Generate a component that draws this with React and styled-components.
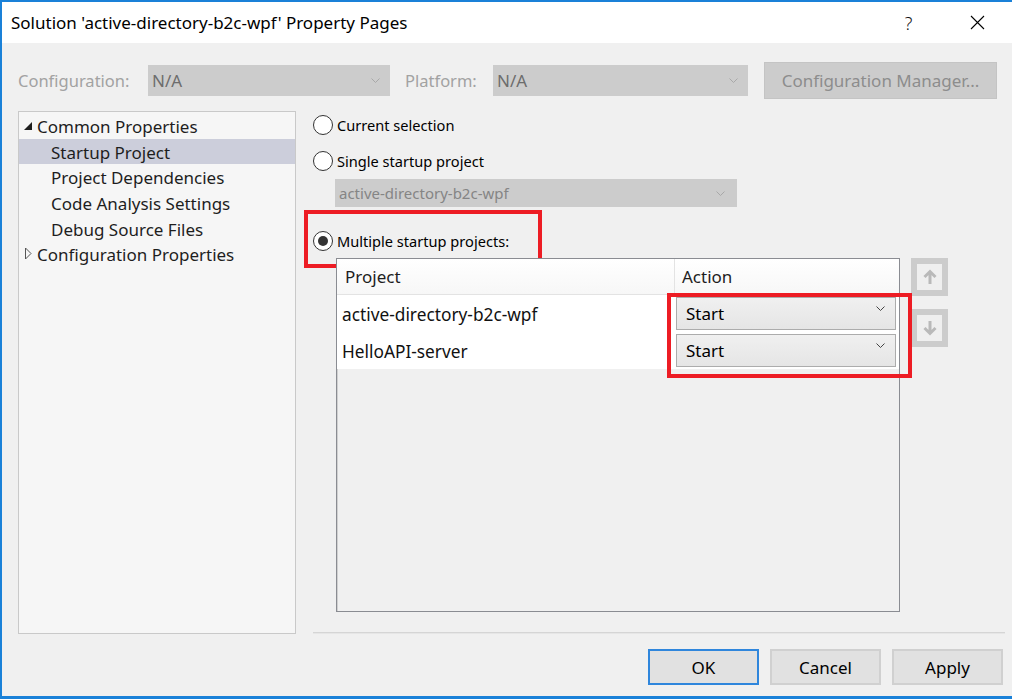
import styled, { createGlobalStyle } from 'styled-components'

const GlobalStyle = createGlobalStyle`
  html, body { margin: 0; padding: 0; background: #f0f0f0; }
  body { font-family: "Noto Sans", "Open Sans", sans-serif; color: #000; }
  * { box-sizing: border-box; }
`;

const projects = [
  { name: 'active-directory-b2c-wpf', action: 'Start' },
  { name: 'HelloAPI-server', action: 'Start' },
];

const treeItems = [
  { label: 'Common Properties', level: 0, expanded: true },
  { label: 'Startup Project', level: 1, selected: true },
  { label: 'Project Dependencies', level: 1 },
  { label: 'Code Analysis Settings', level: 1 },
  { label: 'Debug Source Files', level: 1 },
  { label: 'Configuration Properties', level: 0, expanded: false },
];

function Chevron({ color = '#9a9a9a' }) {
  return (
    <svg width="9" height="5" viewBox="0 0 9 5">
      <path d="M0.5 0.5 L4.5 4.5 L8.5 0.5" fill="none" stroke={color} strokeWidth="1" />
    </svg>
  )
}

function Expander({ expanded }) {
  if (expanded) {
    return (
      <svg width="10" height="10" viewBox="0 0 10 10">
        <polygon points="9,1 9,9 1,9" fill="#1e1e1e" />
      </svg>
    )
  }
  return (
    <svg width="10" height="13" viewBox="0 0 10 13">
      <polygon points="2.5,1 8,6.5 2.5,12" fill="none" stroke="#555" strokeWidth="1" />
    </svg>
  )
}

function Arrow({ down }) {
  return (
    <svg width="14" height="16" viewBox="0 0 14 16" style={down ? { transform: 'rotate(180deg)' } : undefined}>
      <path d="M7 15 V3 M1.5 8 L7 2.5 L12.5 8" fill="none" stroke="#b9b9b9" strokeWidth="3" />
    </svg>
  )
}

export default function App() {
  return (
    <Window>
      <GlobalStyle />
      <TitleBar>
        <Title>Solution 'active-directory-b2c-wpf' Property Pages</Title>
        <CaptionButton>?</CaptionButton>
        <CaptionButton>
          <svg width="15" height="15" viewBox="0 0 15 15">
            <path d="M1 1 L14 14 M14 1 L1 14" stroke="#000" strokeWidth="1.1" />
          </svg>
        </CaptionButton>
      </TitleBar>
      <Body>
        <ConfigRow>
          <ConfigLabel $width={130}>Configuration:</ConfigLabel>
          <DisabledCombo $width={242}>
            N/A
            <Chevron color="#a8a8a8" />
          </DisabledCombo>
          <ConfigLabel $width={88} $gap={15}>Platform:</ConfigLabel>
          <DisabledCombo $width={255}>
            N/A
            <Chevron color="#a8a8a8" />
          </DisabledCombo>
          <DisabledButton>Configuration Manager...</DisabledButton>
        </ConfigRow>
        <Main>
          <Tree>
            {treeItems.map((item) => (
              <TreeRow key={item.label} $level={item.level} $selected={item.selected}>
                {item.level === 0 && (
                  <ExpanderBox>
                    <Expander expanded={item.expanded} />
                  </ExpanderBox>
                )}
                {item.label}
              </TreeRow>
            ))}
          </Tree>
          <Pane>
            <RadioRow>
              <Radio />
              Current selection
            </RadioRow>
            <RadioRow $top={10}>
              <Radio />
              Single startup project
            </RadioRow>
            <ProjectCombo>
              active-directory-b2c-wpf
              <Chevron color="#a8a8a8" />
            </ProjectCombo>
            <RadioRow $top={21}>
              <Radio $checked />
              Multiple startup projects:
              <Highlight $left={-9} $top={-18} $width={238} $height={58} />
            </RadioRow>
            <TableArea>
              <Table>
                <HeaderRow>
                  <HeaderCell $first>Project</HeaderCell>
                  <HeaderCell>Action</HeaderCell>
                </HeaderRow>
                {projects.map((p) => (
                  <Row key={p.name}>
                    <NameCell>{p.name}</NameCell>
                    <ActionCell>
                      <ActionCombo>
                        {p.action}
                        <Chevron color="#444" />
                      </ActionCombo>
                    </ActionCell>
                  </Row>
                ))}
              </Table>
              <MoveButtons>
                <MoveButton><Arrow /></MoveButton>
                <MoveButton><Arrow down /></MoveButton>
              </MoveButtons>
              <Highlight $left={331} $top={35} $width={245} $height={85} />
            </TableArea>
            <Separator />
          </Pane>
        </Main>
        <Footer>
          <DialogButton $default>OK</DialogButton>
          <DialogButton>Cancel</DialogButton>
          <DialogButton>Apply</DialogButton>
        </Footer>
      </Body>
    </Window>
  )
}

const Window = styled.div`
  width: 1012px;
  height: 699px;
  border-top: 2px solid #1a81d8;
  border-left: 2px solid #1a81d8;
  border-bottom: 3px solid #1a81d8;
  background: #f0f0f0;
  display: flex;
  flex-direction: column;
  overflow: hidden;
`;
const TitleBar = styled.div`
  height: 41px;
  background: #fff;
  display: flex;
  align-items: center;
  padding-left: 9px;
  flex-shrink: 0;
`;
const Title = styled.div`
  flex: 1;
  font-size: 17px;
  color: #000;
  padding-bottom: 1px;
`;
const CaptionButton = styled.div`
  width: 69px;
  height: 41px;
  display: flex;
  align-items: center;
  justify-content: center;
  font-size: 18px;
  font-weight: 300;
  color: #111;
`;
const Body = styled.div`
  flex: 1;
  display: flex;
  flex-direction: column;
  padding: 19px 7px 0 16px;
`;
const ConfigRow = styled.div`
  display: flex;
  align-items: center;
  height: 37px;
`;
const ConfigLabel = styled.div`
  width: ${(p) => p.$width}px;
  margin-left: ${(p) => p.$gap || 0}px;
  font-size: 16.5px;
  color: #a2a2a2;
`;
const DisabledCombo = styled.div`
  width: ${(p) => p.$width}px;
  height: 31px;
  background: #cccccc;
  display: flex;
  align-items: center;
  justify-content: space-between;
  padding: 0 10px 0 4px;
  font-size: 17px;
  color: #6d6d6d;
`;
const DisabledButton = styled.div`
  width: 233px;
  height: 37px;
  margin-left: 16px;
  background: #cccccc;
  border: 1px solid #c4c4c4;
  display: flex;
  align-items: center;
  justify-content: center;
  font-size: 17px;
  color: #8d8d8d;
`;
const Main = styled.div`
  display: flex;
  margin-top: 12px;
  height: 523px;
`;
const Tree = styled.div`
  width: 278px;
  height: 523px;
  border: 1px solid #c9c9c9;
  background: #f6f6f6;
  padding-top: 1px;
`;
const TreeRow = styled.div`
  height: 25.6px;
  display: flex;
  align-items: center;
  padding-left: ${(p) => (p.$level === 0 ? 4 : 32)}px;
  padding-top: 2px;
  background: ${(p) => (p.$selected ? '#cccedb' : 'transparent')};
  font-size: 17px;
  color: #1e1e1e;
`;
const ExpanderBox = styled.span`
  width: 14px;
  display: inline-flex;
  align-items: center;
  justify-content: flex-start;
  margin-top: -2px;
`;
const Pane = styled.div`
  flex: 1;
  margin-left: 17px;
  display: flex;
  flex-direction: column;
`;
const RadioRow = styled.div`
  position: relative;
  display: flex;
  align-items: center;
  gap: 4px;
  height: 26px;
  margin-top: ${(p) => (p.$top === undefined ? 1 : p.$top)}px;
  font-size: 14.6px;
  color: #000;
`;
const Radio = styled.span`
  width: 20px;
  height: 20px;
  border-radius: 50%;
  border: 1px solid #333;
  background: #fff;
  display: inline-flex;
  align-items: center;
  justify-content: center;
  &::after {
    content: '';
    width: 10px;
    height: 10px;
    border-radius: 50%;
    background: ${(p) => (p.$checked ? '#333' : 'transparent')};
  }
`;
const ProjectCombo = styled.div`
  width: 402px;
  height: 28px;
  margin: 5px 0 0 22px;
  background: #cccccc;
  display: flex;
  align-items: center;
  justify-content: space-between;
  padding: 0 12px 0 4px;
  font-size: 15px;
  color: #858585;
`;
const Highlight = styled.div`
  position: absolute;
  left: ${(p) => p.$left}px;
  top: ${(p) => p.$top}px;
  width: ${(p) => p.$width}px;
  height: ${(p) => p.$height}px;
  border: 4px solid #ed1c24;
  pointer-events: none;
`;
const TableArea = styled.div`
  position: relative;
  display: flex;
  gap: 11px;
  margin: 4px 0 0 23px;
`;
const Table = styled.div`
  width: 564px;
  height: 354px;
  border: 1px solid #8a8c92;
  box-shadow: inset 1px 1px 0 #d0d0d0;
  background: #f0f0f0;
`;
const HeaderRow = styled.div`
  display: flex;
  height: 36px;
  background: linear-gradient(#ffffff, #f7f7f7);
  border-bottom: 1px solid #e3e3e3;
`;
const HeaderCell = styled.div`
  width: ${(p) => (p.$first ? '338px' : 'auto')};
  flex: ${(p) => (p.$first ? 'none' : 1)};
  display: flex;
  align-items: center;
  padding-left: ${(p) => (p.$first ? 8 : 7)}px;
  border-right: ${(p) => (p.$first ? '1px solid #e3e3e3' : 'none')};
  font-size: 17px;
  color: #1e1e1e;
`;
const Row = styled.div`
  display: flex;
  height: 37px;
  background: #fff;
`;
const NameCell = styled.div`
  width: 338px;
  display: flex;
  align-items: center;
  padding-left: 5px;
  padding-top: 1px;
  font-size: 17.3px;
  color: #111;
`;
const ActionCell = styled.div`
  flex: 1;
  padding: 2px 3px 2px 1px;
`;
const ActionCombo = styled.div`
  height: 33px;
  border: 1px solid #acacac;
  background: linear-gradient(#f0f0f0, #e5e5e5);
  display: flex;
  align-items: center;
  justify-content: space-between;
  padding: 0 10px 1px 9px;
  font-size: 17px;
  color: #000;
  svg { margin-top: -9px; }
`;
const MoveButtons = styled.div`
  display: flex;
  flex-direction: column;
  gap: 13px;
`;
const MoveButton = styled.div`
  width: 37px;
  height: 38px;
  border: 6px solid #cccccc;
  background: #efefef;
  display: flex;
  align-items: center;
  justify-content: center;
`;
const Separator = styled.div`
  margin-top: auto;
  height: 2px;
  background: #d5d5d5;
  border-bottom: 1px solid #e6e6e6;
`;
const Footer = styled.div`
  display: flex;
  justify-content: flex-end;
  gap: 11px;
  margin: 15px 2px 0 0;
`;
const DialogButton = styled.div`
  width: 111px;
  height: 36px;
  background: #e1e1e1;
  border: ${(p) => (p.$default ? '2px solid #2f86dc' : '2px solid #d0d0d0')};
  display: flex;
  align-items: center;
  justify-content: center;
  font-size: 17px;
  color: #000;
`;
